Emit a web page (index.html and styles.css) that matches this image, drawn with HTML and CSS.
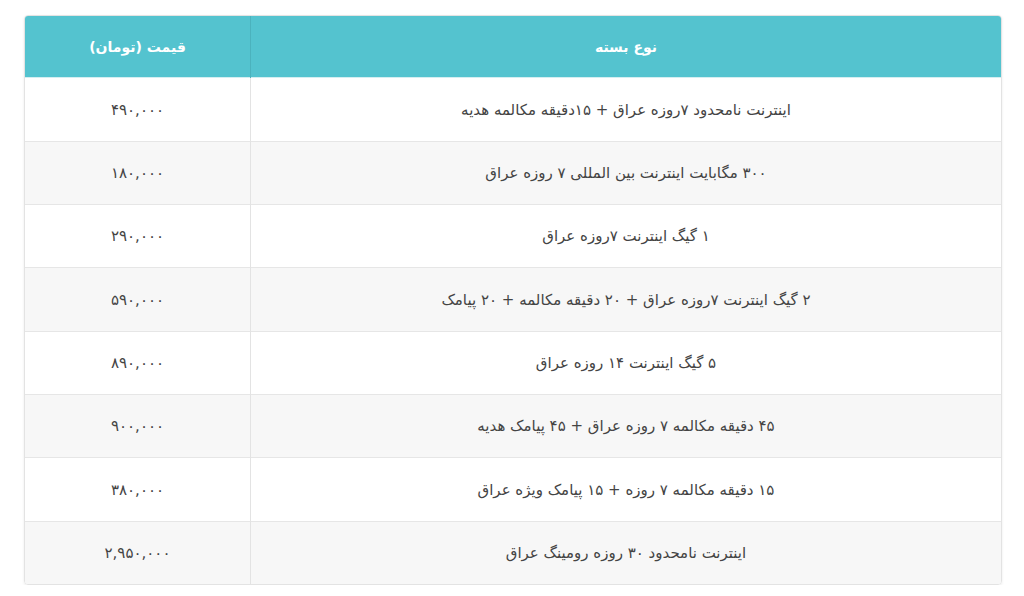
FILE: index.html
```html
<!DOCTYPE html>
<html lang="fa" dir="rtl">
<head>
<meta charset="utf-8">
<link rel="stylesheet" href="styles.css">
</head>
<body>
<div class="wrap">
<table class="prices">
<thead>
<tr><th class="name">نوع بسته</th><th class="price">قیمت (تومان)</th></tr>
</thead>
<tbody>
<tr><td>اینترنت نامحدود ۷روزه عراق + ۱۵دقیقه مکالمه هدیه</td><td>۴۹۰,۰۰۰</td></tr>
<tr><td>۳۰۰ مگابایت اینترنت بین المللی ۷ روزه عراق</td><td>۱۸۰,۰۰۰</td></tr>
<tr><td>۱ گیگ اینترنت ۷روزه عراق</td><td>۲۹۰,۰۰۰</td></tr>
<tr><td>۲ گیگ اینترنت ۷روزه عراق + ۲۰ دقیقه مکالمه + ۲۰ پیامک</td><td>۵۹۰,۰۰۰</td></tr>
<tr><td>۵ گیگ اینترنت ۱۴ روزه عراق</td><td>۸۹۰,۰۰۰</td></tr>
<tr><td>۴۵ دقیقه مکالمه ۷ روزه عراق + ۴۵ پیامک هدیه</td><td>۹۰۰,۰۰۰</td></tr>
<tr><td>۱۵ دقیقه مکالمه ۷ روزه + ۱۵ پیامک ویژه عراق</td><td>۳۸۰,۰۰۰</td></tr>
<tr><td>اینترنت نامحدود ۳۰ روزه رومینگ عراق</td><td>۲,۹۵۰,۰۰۰</td></tr>
</tbody>
</table>
</div>
</body>
</html>
```
FILE: styles.css
```css
html, body {
  margin: 0;
  padding: 0;
  background: #ffffff;
}
body {
  font-family: "DejaVu Sans", "Noto Sans", sans-serif;
  color: #444444;
  padding: 15px 22px 0 24px;
}
.wrap {
  width: 976px;
  border: 1px solid #e3e3e3;
  border-radius: 4px;
  overflow: hidden;
  box-shadow: 0 1px 3px rgba(0,0,0,0.08);
}
.prices {
  width: 100%;
  border-collapse: collapse;
  table-layout: fixed;
}
.prices th {
  background: #54c3cf;
  color: #ffffff;
  font-weight: bold;
  font-size: 14px;
  height: 61px;
  padding: 0;
  text-align: center;
  border-left: 1px solid #4bb2bd;
}
.prices th.price {
  border-left: none;
  width: 225px;
}
.prices thead tr {
  border-bottom: 1px solid #d4eef1;
}
.prices td {
  height: 62px;
  padding: 0;
  text-align: center;
  font-size: 15px;
  border-top: 1px solid #e6e6e6;
  border-left: 1px solid #e3e3e3;
}
.prices td:last-child {
  border-left: none;
}
.prices tbody tr:nth-child(even) td {
  background: #f7f7f7;
}
.prices tbody tr:first-child td {
  border-top: none;
}
.prices tbody tr:nth-child(3n+1) td {
  height: 63px;
}
```
